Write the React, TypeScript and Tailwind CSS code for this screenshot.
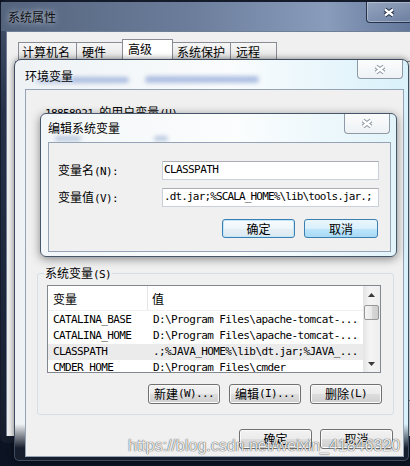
import React from "react";

const mono = "font-['DejaVu_Sans_Mono',monospace] text-[11px] tracking-[-0.6px]";

function M({ children }: { children: React.ReactNode }) {
  return <span className={mono}>{children}</span>;
}

function CloseX({ glass }: { glass?: boolean }) {
  const edge = glass ? "#223048" : "#8d98a5";
  return (
    <svg width="14" height="11" viewBox="0 0 14 11" aria-hidden>
      <path d="M3 2.5L11 8.5M11 2.5L3 8.5" stroke={edge} strokeWidth="4.4" fill="none" />
      <path d="M3 2.5L11 8.5M11 2.5L3 8.5" stroke="#fff" strokeWidth="2.2" fill="none" />
    </svg>
  );
}

function Arrow({ down }: { down?: boolean }) {
  return (
    <svg width="7" height="4" viewBox="0 0 7 4" aria-hidden>
      <polygon points={down ? "0,0 7,0 3.5,4" : "0,4 7,4 3.5,0"} fill="#3a3a3a" />
    </svg>
  );
}

function Btn({ children, className = "", tone = "normal" }: { children: React.ReactNode; className?: string; tone?: "normal" | "default" | "hover" }) {
  const look =
    tone === "hover"
      ? "border-[#3c7fb1] bg-[linear-gradient(#eaf6fd,#d9f0fc_50%,#bee6fd_51%,#a7d9f5)]"
      : tone === "default"
      ? "border-[#3c7fb1] bg-[linear-gradient(#f7fbfd,#eef6fa_50%,#e4eff5_51%,#dde9f1)] shadow-[inset_0_0_0_1px_#c2e7fa]"
      : "border-[#707070] bg-[linear-gradient(#f2f2f2,#ebebeb_50%,#dddddd_51%,#cfcfcf)] shadow-[inset_0_0_0_1px_#fbfbfb]";
  return (
    <div className={`flex items-center justify-center rounded-[3px] border leading-[14px] ${look} ${className}`}>
      {children}
    </div>
  );
}

const rows = [
  ["CATALINA_BASE", "D:\\Program Files\\apache-tomcat-..."],
  ["CATALINA_HOME", "D:\\Program Files\\apache-tomcat-..."],
  ["CLASSPATH", ".;%JAVA_HOME%\\lib\\dt.jar;%JAVA_..."],
  ["CMDER_HOME", "D:\\Program Files\\cmder"],
];

export default function App() {
  return (
    <div className="relative w-[410px] h-[466px] overflow-hidden bg-[#0c1322] font-['Noto_Sans_CJK_SC','Liberation_Sans',sans-serif] text-[12px] text-black">
      {/* 系统属性 */}
      <div className="absolute left-0 top-0 w-[420px] h-[443px] flex flex-col rounded-[6px] border border-t-2 border-[#141c2c] bg-[linear-gradient(to_bottom,#46546c,#27324a_25%,#151d2d)]">
        <div className="h-[29px] flex items-start justify-between bg-[linear-gradient(to_right,#55647d,#6b7d9b_45%,#899cbb_78%,#5f7398)]">
          <span className="pl-[7px] pt-[7px] leading-[16px] text-[#111] [text-shadow:0_0_6px_rgba(225,232,242,0.95)]">系统属性</span>
          <div className="mr-[7px] w-[46px] h-[21px] flex items-center justify-center rounded-b-[4px] border border-t-0 border-[#26324a] bg-[linear-gradient(to_bottom,rgba(255,255,255,0.22),rgba(255,255,255,0.06))] shadow-[inset_0_0_0_1px_rgba(255,255,255,0.3)]">
            <CloseX glass />
          </div>
        </div>
        <div className="flex-1 ml-[5px] mb-[6px] border-l border-t border-[#6f7f96] bg-[#f0f0f0] flex flex-col">
          <div className="flex items-end pl-[11px] h-[29px]">
            <div className="w-[59px] h-[19px] pl-[3px] border border-b-0 border-[#898c95] bg-[linear-gradient(#f6f6f6,#e3e3e3)] leading-[18px]">计算机名</div>
            <div className="-ml-px w-[47px] h-[19px] pl-[5px] border border-b-0 border-[#898c95] bg-[linear-gradient(#f6f6f6,#e3e3e3)] leading-[18px]">硬件</div>
            <div className="-ml-px w-[51px] h-[22px] pl-[5px] border border-b-0 border-[#898c95] bg-white leading-[18px]">高级</div>
            <div className="-ml-px w-[59px] h-[19px] pl-[4px] border border-b-0 border-[#898c95] bg-[linear-gradient(#f6f6f6,#e3e3e3)] leading-[18px]">系统保护</div>
            <div className="-ml-px w-[47px] h-[19px] pl-[5px] border border-b-0 border-[#898c95] bg-[linear-gradient(#f6f6f6,#e3e3e3)] leading-[18px]">远程</div>
          </div>
          <div className="ml-[8px] h-[340px] border border-[#898c95] bg-[#fbfbfb]" />
        </div>
      </div>

      {/* 环境变量 */}
      <div className="absolute left-[14px] top-[59px] w-[395px] h-[402px] flex flex-col rounded-t-[7px] rounded-b-[5px] border border-[#3f4d62] bg-[linear-gradient(to_bottom,transparent_0,transparent_91%,rgba(14,21,36,0.96)_97%),linear-gradient(to_right,#eef2f5,#fafcfd_55%,#d9f1fa)] shadow-[0_0_6px_rgba(0,0,0,0.5)]">
        <div className="relative h-[29px] flex items-start justify-between overflow-hidden">
          <span className="relative z-10 pl-[10px] pt-[8px] leading-[16px] [text-shadow:0_0_5px_#fff]">环境变量</span>
          {/* blurred remains of covered text */}
          <div className="absolute left-[22px] top-[17px] w-[92px] h-[6px] rounded-full bg-[#8ea6d6] blur-[2px] opacity-70" />
          <div className="absolute left-[130px] top-[16px] w-[114px] h-[7px] rounded-full bg-[#8ea6d6] blur-[2px] opacity-70" />
          <div className="mr-[5px] w-[46px] h-[19px] flex items-center justify-center rounded-b-[4px] border border-t-0 border-[#8e9aa8] bg-[linear-gradient(#fbfcfd,#eef2f5)]">
            <CloseX />
          </div>
        </div>
        <div className="flex-1 ml-[10px] mr-[4px] mb-[3px] border border-[#94a3b5] bg-[#f0f0f0] flex flex-col pl-[11px] pr-[9px]">
          <div className="mt-[15px] pl-[8px] leading-[14px]">
            <M>18858921 </M>的用户变量<M>(U)</M>
          </div>

          <div className="relative mt-[152px] w-[357px] h-[142px] border border-[#d5dfe5] rounded-[3px] flex flex-col">
            <div className="absolute left-[6px] -top-[8px] px-[1px] bg-[#f0f0f0] leading-[14px]">
              系统变量<M>(S)</M>
            </div>
            <div className="mt-[11px] ml-[9px] w-[334px] h-[88px] border border-[#828790] bg-white flex overflow-hidden">
              <div className="flex-1 flex flex-col">
                <div className="h-[25px] flex shrink-0 border-b border-[#f0f0f0]">
                  <div className="w-[100px] pl-[5px] pt-[2px] flex items-center border-r border-[#e5e5e5]">变量</div>
                  <div className="flex-1 pl-[4px] pt-[2px] flex items-center">值</div>
                </div>
                <div className="mt-[1px] flex flex-col">
                  {rows.map(([k, v]) => (
                    <div key={k} className={`h-[16px] shrink-0 flex items-center whitespace-nowrap ${k === "CLASSPATH" ? "bg-[#ebebeb]" : ""}`}>
                      <div className={`w-[100px] pl-[5px] ${mono}`}>{k}</div>
                      <div className={`pl-[5px] ${mono}`}>{v}</div>
                    </div>
                  ))}
                </div>
              </div>
              <div className="w-[17px] shrink-0 flex flex-col bg-[linear-gradient(to_right,#e4e4e4,#f4f4f4_40%,#efefef)]">
                <div className="h-[17px] flex items-center justify-center"><Arrow /></div>
                <div className="mt-[2px] mx-[1px] h-[15px] rounded-[2px] border border-[#979797] bg-[linear-gradient(to_right,#f5f5f5,#e9e9e9_50%,#d8d8d8_51%,#cecece)]" />
                <div className="flex-1" />
                <div className="h-[17px] flex items-center justify-center"><Arrow down /></div>
              </div>
            </div>
            <div className="mt-[11px] flex justify-end gap-[9px] pr-[11px]">
              <Btn className="w-[72px] h-[20px]">新建<M>(W)...</M></Btn>
              <Btn className="w-[72px] h-[20px]">编辑<M>(I)...</M></Btn>
              <Btn className="w-[72px] h-[20px]">删除<M>(L)</M></Btn>
            </div>
          </div>

          <div className="mt-[14px] flex justify-end gap-[8px] pr-[1px]">
            <Btn className="w-[73px] h-[20px]">确定</Btn>
            <Btn className="w-[73px] h-[20px]">取消</Btn>
          </div>
        </div>
      </div>

      {/* 编辑系统变量 */}
      <div className="absolute left-[40px] top-[113px] w-[357px] h-[144px] flex flex-col rounded-[6px] border border-[#46566b] bg-[linear-gradient(to_right,#f3f6f8,#fbfdfe_55%,#e2f4fa)] shadow-[0_2px_10px_rgba(0,0,0,0.45)]">
        <div className="relative h-[28px] flex items-start justify-between overflow-hidden">
          <span className="relative z-10 pl-[7px] pt-[6px] leading-[16px] [text-shadow:0_0_5px_#fff]">编辑系统变量</span>
          <div className="absolute left-[14px] top-[22px] w-[26px] h-[5px] rounded-full bg-[#9fb4d2] blur-[2px] opacity-70" />
          <div className="absolute left-[113px] top-[22px] w-[14px] h-[5px] rounded-full bg-[#9fb4d2] blur-[2px] opacity-70" />
          <div className="mr-[6px] w-[46px] h-[20px] flex items-center justify-center rounded-b-[4px] border border-t-0 border-[#8e9aa8] bg-[linear-gradient(#fbfcfd,#eef2f5)]">
            <CloseX />
          </div>
        </div>
        <div className="ml-[7px] mr-[5px] h-[110px] border border-[#94a3b5] bg-[#f0f0f0] flex flex-col pl-[9px] pt-[18px]">
          <div className="flex items-center h-[19px]">
            <div className="w-[104px] leading-[14px]">变量名<M>(N):</M></div>
            <div className={`w-[217px] h-[19px] pl-[1px] flex items-center border border-[#c9d0d9] border-t-[#abadb3] bg-white whitespace-nowrap overflow-hidden ${mono}`}>CLASSPATH</div>
          </div>
          <div className="mt-[8px] flex items-center h-[19px]">
            <div className="w-[104px] leading-[14px]">变量值<M>(V):</M></div>
            <div className="w-[217px] h-[19px] pl-[1px] flex items-center border border-[#c9d0d9] border-t-[#abadb3] bg-white whitespace-nowrap overflow-hidden font-['DejaVu_Sans_Mono',monospace] text-[11px] tracking-[-0.85px]">{".dt.jar;%SCALA_HOME%\\lib\\tools.jar.;"}</div>
          </div>
          <div className="mt-[12px] flex justify-end gap-[9px] pr-[12px]">
            <Btn tone="default" className="w-[73px] h-[19px]">确定</Btn>
            <Btn tone="hover" className="w-[74px] h-[19px]">取消</Btn>
          </div>
        </div>
      </div>

      <div className="absolute left-[128px] top-[437px] font-['Liberation_Sans',sans-serif] text-[16px] leading-[18px] text-white/90 [text-shadow:0_0_1px_rgba(0,0,0,0.7),0_0_1px_rgba(0,0,0,0.5)] whitespace-nowrap">
        https://blog.csdn.net/weixin_41846320
      </div>
    </div>
  );
}
